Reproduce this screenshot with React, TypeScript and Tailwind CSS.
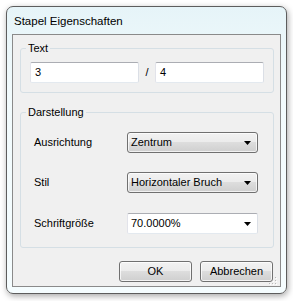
import React from 'react';

const dlgFont = { fontFamily: '"Liberation Sans", Arial, sans-serif' };

const Arrow = () => (
  <svg width="7" height="4" viewBox="0 0 7 4" className="shrink-0">
    <polygon points="0,0 7,0 3.5,4" fill="#000" />
  </svg>
);

const Combo = ({ value, editable }: { value: string; editable?: boolean }) => (
  <div
    className={`w-[131px] h-[21px] flex items-center justify-between pl-[3px] pr-[6px] text-[11px] text-black ${
      editable
        ? 'bg-white border border-[#abadb3] border-b-[#e3e9ef] border-l-[#e2e3ea] border-r-[#dbdfe6] rounded-[2px]'
        : 'border border-[#707070] rounded-[3px] bg-[linear-gradient(#f2f2f2_0%,#ebebeb_50%,#dddddd_50%,#cfcfcf_100%)] shadow-[inset_0_0_0_1px_rgba(255,255,255,0.7)]'
    }`}
    style={dlgFont}
  >
    <span>{value}</span>
    <Arrow />
  </div>
);

const TextBox = ({ value }: { value: string }) => (
  <div
    className="w-[109px] h-[21px] flex items-center pl-[4px] bg-white border border-[#abadb3] border-b-[#e3e9ef] border-l-[#e2e3ea] border-r-[#dbdfe6] rounded-[2px] text-[11px] text-black"
    style={dlgFont}
  >
    {value}
  </div>
);

const Button = ({ label }: { label: string }) => (
  <button
    className="w-[73px] h-[21px] flex items-center justify-center border border-[#707070] rounded-[3px] bg-[linear-gradient(#f2f2f2_0%,#ebebeb_50%,#dddddd_50%,#cfcfcf_100%)] shadow-[inset_0_0_0_1px_rgba(255,255,255,0.75)] text-[11px] text-black"
    style={dlgFont}
  >
    {label}
  </button>
);

const Row = ({ label, children }: { label: string; children: React.ReactNode }) => (
  <div className="flex items-center h-[21px]">
    <span className="w-[93px] text-[11px] text-black" style={dlgFont}>
      {label}
    </span>
    {children}
  </div>
);

export default function App() {
  return (
    <div className="w-[293px] h-[301px] bg-white pl-[6px] pt-[6px]">
      <div className="w-[281px] h-[288px] flex flex-col rounded-[7px] border border-[#5d5d5d] bg-[linear-gradient(#e6f4f8,#f2fbfd_30%,#f5fdff)] shadow-[1px_2px_6px_rgba(0,0,0,0.35)] px-[5px] pb-[6px]">
        <div className="h-[27px] flex items-center pl-[2px] pt-[2px] text-[11.5px] text-black" style={dlgFont}>
          Stapel Eigenschaften
        </div>

        <div className="relative flex-1 flex flex-col border border-[#8a8a8a] bg-[#f0f0f0]">
          <fieldset className="ml-[7px] mt-[6px] w-[254px] border border-[#d5dfe5] rounded-[3px]">
            <legend className="ml-[5px] px-[2px] text-[11px] leading-[14px] text-black" style={dlgFont}>
              Text
            </legend>
            <div className="flex items-center pl-[9px] pt-[7px] pb-[9px]">
              <TextBox value="3" />
              <span className="w-[16px] text-center text-[11px] text-black" style={dlgFont}>/</span>
              <TextBox value="4" />
            </div>
          </fieldset>

          <fieldset className="ml-[7px] mt-[12px] w-[254px] border border-[#d5dfe5] rounded-[3px]">
            <legend className="ml-[5px] px-[2px] text-[11px] leading-[14px] text-black" style={dlgFont}>
              Darstellung
            </legend>
            <div className="flex flex-col pl-[13px] pt-[13px] pb-[13px]">
              <Row label="Ausrichtung">
                <Combo value="Zentrum" />
              </Row>
              <div className="mt-[19px]">
                <Row label="Stil">
                  <Combo value="Horizontaler Bruch" />
                </Row>
              </div>
              <div className="mt-[20px]">
                <Row label="Schriftgröße">
                  <Combo value="70.0000%" editable />
                </Row>
              </div>
            </div>
          </fieldset>

          <div className="flex justify-end gap-[8px] pr-[7px] mt-[13px]">
            <Button label="OK" />
            <Button label="Abbrechen" />
          </div>

          <svg width="9" height="9" viewBox="0 0 9 9" className="absolute right-[3px] bottom-[1px]">
            {[
              [7, 1],
              [4, 4],
              [7, 4],
              [1, 7],
              [4, 7],
              [7, 7],
            ].map(([x, y]) => (
              <g key={`${x}-${y}`}>
                <rect x={x} y={y} width="1" height="1" fill="#b8b8b8" />
                <rect x={x + 1} y={y + 1} width="1" height="1" fill="#ffffff" />
              </g>
            ))}
          </svg>
        </div>
      </div>
    </div>
  );
}
